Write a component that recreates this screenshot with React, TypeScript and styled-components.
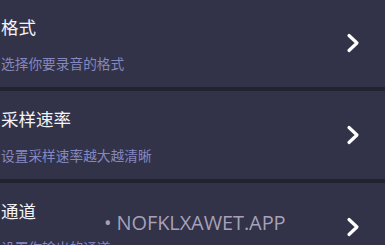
import React from "react";
import styled, { createGlobalStyle } from "styled-components";

const Global = createGlobalStyle`
  html, body { margin: 0; padding: 0; background: #222330; }
  body { font-family: "Noto Sans CJK SC", "Noto Sans", sans-serif; overflow: hidden; }
`;

const Page = styled.div`
  position: relative;
  width: 385px;
  height: 245px;
  overflow: hidden;
  background: #222330;
`;

const List = styled.div`
  display: flex;
  flex-direction: column;
  gap: 4px;
  margin-top: -1px;
`;

const Row = styled.div`
  display: flex;
  align-items: center;
  height: 88px;
  background: #323348;
  padding: 0 25px 0 1px;
  box-sizing: border-box;
`;

const Texts = styled.div`
  flex: 1;
  align-self: stretch;
  display: flex;
  flex-direction: column;
  gap: 14px;
  padding-top: 16px;
`;

const Title = styled.div`
  color: #f4f4f8;
  font-size: 17.5px;
  font-weight: 400;
  line-height: 24px;
`;

const Sub = styled.div`
  color: #8588c0;
  font-size: 13.7px;
  line-height: 20px;
`;

const Chevron = styled.svg`
  width: 14px;
  height: 22px;
  flex: none;
`;

const Watermark = styled.div`
  position: absolute;
  left: 104px;
  top: 209px;
  color: rgba(190, 182, 206, 0.85);
  font-family: "Open Sans", "Noto Sans", sans-serif;
  font-size: 20px;
  letter-spacing: -0.1px;
  white-space: nowrap;
`;

const items = [
  { title: "格式", sub: "选择你要录音的格式" },
  { title: "采样速率", sub: "设置采样速率越大越清晰" },
  { title: "通道", sub: "设置你输出的通道" },
];

export default function App() {
  return (
    <Page>
      <Global />
      <List>
        {items.map((it) => (
          <Row key={it.title}>
            <Texts>
              <Title>{it.title}</Title>
              <Sub>{it.sub}</Sub>
            </Texts>
            <Chevron viewBox="0 0 14 22">
              <path
                d="M3 3.5 L11 11 L3 18.5"
                fill="none"
                stroke="#ffffff"
                strokeWidth="3.2"
                strokeLinecap="round"
                strokeLinejoin="round"
              />
            </Chevron>
          </Row>
        ))}
      </List>
      <Watermark>• NOFKLXAWET.APP</Watermark>
    </Page>
  );
}
